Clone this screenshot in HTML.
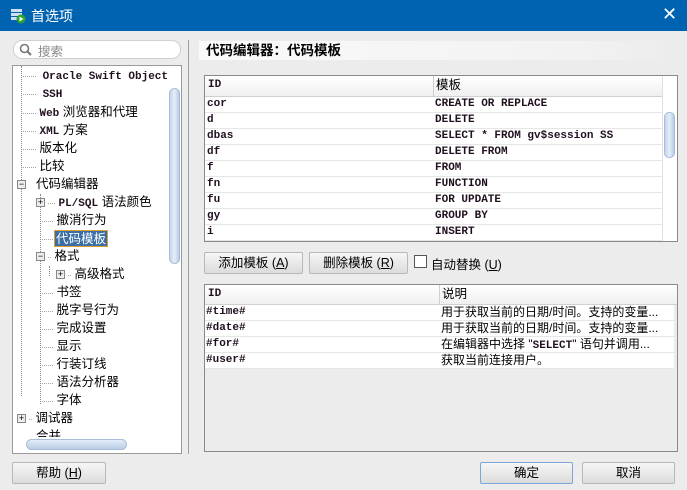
<!DOCTYPE html>
<html><head><meta charset="utf-8"><style>
*{box-sizing:border-box;margin:0;padding:0}
body{width:687px;height:490px;overflow:hidden;background:#ececec;font-family:"Liberation Sans","Noto Sans CJK SC",sans-serif;font-size:12px;color:#000;position:relative}
.abs{position:absolute}
.title{left:0;top:0;width:687px;height:31px;background:#0063b1;color:#fff;font-size:14px}
.mono{font-family:"Liberation Mono","Noto Sans CJK SC",monospace;font-weight:bold;font-size:11px;color:#201020}
.tree div.r{position:absolute;height:18px;line-height:18px;font-size:12.5px;white-space:nowrap}
.tree div.r.mono{font-size:11px}
.btn{position:absolute;height:22px;border:1px solid #b8b8b8;border-radius:2px;background:linear-gradient(#f6f6f6,#dcdcdc);text-align:center;line-height:20px;font-size:12.5px}
.tbl{position:absolute;border:1px solid #8a8a8a;background:#ececec;overflow:hidden}
.row{position:absolute;left:0;height:16px;line-height:15px;background:#fff;border-bottom:1px solid #e6e6e6;white-space:nowrap}
.hdr{position:absolute;left:0;top:0;background:linear-gradient(#fff,#f0f0f0);border-bottom:1px solid #d0d0d0;font-size:12.5px;line-height:19px}
.dot{position:absolute;border-left:1px dotted #888}
.pm{position:absolute;width:9px;height:9px;border:1px solid #888;background:#eee;font-size:9px;line-height:7px;text-align:center}
.g{color:#999;font-weight:normal;font-family:"Liberation Sans",sans-serif;font-size:9px;letter-spacing:-1px}
</style></head><body>
<div class="abs title">
 <svg class="abs" style="left:10px;top:8px" width="16" height="16"><rect x="1" y="1" width="11" height="3" fill="#cfe0f4"/><rect x="1" y="5" width="11" height="3" fill="#cfe0f4"/><rect x="1" y="9" width="6" height="3" fill="#cfe0f4"/><circle cx="11" cy="11" r="4.5" fill="#2aa52a"/><path d="M9.5 8.5 L13.5 11 L9.5 13.5Z" fill="#fff"/></svg>
 <span class="abs" style="left:31px;top:6px">首选项</span>
 <span class="abs" style="left:662px;top:4px;font-size:18px">✕</span>
</div>
<div class="abs" style="left:13px;top:40px;width:168px;height:19px;border:1px solid #d0d0d0;border-radius:9px;background:#fff"></div>
<svg class="abs" style="left:19px;top:43px" width="14" height="14"><circle cx="5.5" cy="5.5" r="4" fill="none" stroke="#777" stroke-width="1.6"/><path d="M8.5 8.5L12 12" stroke="#777" stroke-width="2"/></svg>
<span class="abs" style="left:38px;top:41px;color:#888;font-size:12.5px">搜索</span>
<div class="abs tree" style="left:12px;top:65px;width:170px;height:389px;border:1px solid #9a9a9a;background:#fff;overflow:hidden">
 <div class="dot" style="left:8px;top:0;height:330px"></div>
 <div class="dot" style="left:27px;top:128px;height:210px"></div>
 <div class="dot" style="left:36px;top:200px;height:10px"></div>
 <div class="r mono" style="left:9px;top:1px"><span class="g">·······</span> Oracle Swift Object St</div>
 <div class="r mono" style="left:9px;top:19px"><span class="g">·······</span> SSH</div>
 <div class="r" style="left:9px;top:37px"><span class="g">·······</span> <span class="mono">Web</span> 浏览器和代理</div>
 <div class="r" style="left:9px;top:55px"><span class="g">·······</span> <span class="mono">XML</span> 方案</div>
 <div class="r" style="left:9px;top:73px"><span class="g">·······</span> 版本化</div>
 <div class="r" style="left:9px;top:91px"><span class="g">·······</span> 比较</div>
 <div class="pm" style="left:4px;top:114px">−</div><div class="r" style="left:23px;top:109px">代码编辑器</div>
 <div class="pm" style="left:23px;top:132px">+</div><div class="r" style="left:34px;top:127px"><span class="g">····</span> <span class="mono">PL/SQL</span> 语法颜色</div>
 <div class="r" style="left:28px;top:145px"><span class="g">······</span> 撤消行为</div>
 <div class="r" style="left:28px;top:163px"><span class="g">······</span></div>
 <div class="r" style="left:41px;top:164px;height:17px;line-height:16px;background:#3a6ea5;color:#fff;border:1px solid #e0a030;padding:0 1px">代码模板</div>
 <div class="pm" style="left:23px;top:186px">−</div><div class="r" style="left:34px;top:181px"><span class="g">··</span> 格式</div>
 <div class="pm" style="left:43px;top:204px">+</div><div class="r" style="left:54px;top:199px"><span class="g">··</span> 高级格式</div>
 <div class="r" style="left:28px;top:217px"><span class="g">······</span> 书签</div>
 <div class="r" style="left:28px;top:235px"><span class="g">······</span> 脱字号行为</div>
 <div class="r" style="left:28px;top:253px"><span class="g">······</span> 完成设置</div>
 <div class="r" style="left:28px;top:271px"><span class="g">······</span> 显示</div>
 <div class="r" style="left:28px;top:289px"><span class="g">······</span> 行装订线</div>
 <div class="r" style="left:28px;top:307px"><span class="g">······</span> 语法分析器</div>
 <div class="r" style="left:28px;top:325px"><span class="g">······</span> 字体</div>
 <div class="pm" style="left:4px;top:348px">+</div><div class="r" style="left:15px;top:343px"><span class="g">··</span> 调试器</div>
 <div class="r" style="left:23px;top:361px">合并</div>
 <div class="abs" style="left:154px;top:0;width:15px;height:371px;background:#fff"></div>
 <div class="abs" style="left:156px;top:22px;width:11px;height:176px;border-radius:6px;background:linear-gradient(90deg,#c4d6ec,#e4eef9,#b8cce4);border:1px solid #a8bcd8"></div>
 <div class="abs" style="left:0;top:371px;width:168px;height:16px;background:#fff"></div>
 <div class="abs" style="left:13px;top:373px;width:101px;height:11px;border-radius:6px;background:linear-gradient(#e4eef9,#b8cce4);border:1px solid #a8bcd8"></div>
</div>
<div class="abs" style="left:188px;top:40px;width:1px;height:414px;background:#a0a0a0"></div>
<div class="abs" style="left:199px;top:41px;width:474px;height:19px;background:linear-gradient(90deg,#fafafa,#f2f2f2 80%,#ececec);font-size:13.5px;line-height:19px;padding-left:7px;font-weight:bold">代码编辑器：代码模板</div>
<div class="tbl" style="left:204px;top:75px;width:474px;height:167px">
 <div class="hdr" style="width:457px;height:21px"><span class="abs mono" style="left:3px">ID</span><span class="abs" style="left:228px;border-left:1px solid #d0d0d0;padding-left:2px;height:20px">模板</span></div>
 <div class="abs" style="left:457px;top:0;width:15px;height:165px;background:#fff;border-left:1px solid #e0e0e0"></div>
 <div class="abs" style="left:459px;top:36px;width:11px;height:46px;border-radius:5px;background:linear-gradient(90deg,#c4d6ec,#e4eef9,#b8cce4);border:1px solid #a8bcd8"></div>
 <div class="mono">
 <div class="row" style="top:21px;width:457px"><span class="abs" style="left:2px">cor</span><span class="abs" style="left:230px">CREATE OR REPLACE</span></div>
 <div class="row" style="top:37px;width:457px"><span class="abs" style="left:2px">d</span><span class="abs" style="left:230px">DELETE</span></div>
 <div class="row" style="top:53px;width:457px"><span class="abs" style="left:2px">dbas</span><span class="abs" style="left:230px">SELECT * FROM gv$session SS</span></div>
 <div class="row" style="top:69px;width:457px"><span class="abs" style="left:2px">df</span><span class="abs" style="left:230px">DELETE FROM</span></div>
 <div class="row" style="top:85px;width:457px"><span class="abs" style="left:2px">f</span><span class="abs" style="left:230px">FROM</span></div>
 <div class="row" style="top:101px;width:457px"><span class="abs" style="left:2px">fn</span><span class="abs" style="left:230px">FUNCTION</span></div>
 <div class="row" style="top:117px;width:457px"><span class="abs" style="left:2px">fu</span><span class="abs" style="left:230px">FOR UPDATE</span></div>
 <div class="row" style="top:133px;width:457px"><span class="abs" style="left:2px">gy</span><span class="abs" style="left:230px">GROUP BY</span></div>
 <div class="row" style="top:149px;width:457px"><span class="abs" style="left:2px">i</span><span class="abs" style="left:230px">INSERT</span></div>
 </div>
</div>
<div class="btn" style="left:204px;top:252px;width:99px">添加模板 (<u>A</u>)</div>
<div class="btn" style="left:309px;top:252px;width:99px">删除模板 (<u>R</u>)</div>
<div class="abs" style="left:414px;top:255px;width:13px;height:13px;border:1px solid #555;background:#fff"></div>
<span class="abs" style="left:431px;top:254px;font-size:12.5px">自动替换 (<u>U</u>)</span>
<div class="tbl" style="left:204px;top:284px;width:474px;height:168px">
 <div class="hdr" style="width:472px;height:20px"><span class="abs mono" style="left:3px">ID</span><span class="abs" style="left:234px;border-left:1px solid #d0d0d0;padding-left:2px;height:19px">说明</span></div>
 <div class="row" style="top:20px;width:469px"><span class="abs mono" style="left:1px">#time#</span><span class="abs" style="left:236px">用于获取当前的日期/时间。支持的变量...</span></div>
 <div class="row" style="top:36px;width:469px"><span class="abs mono" style="left:1px">#date#</span><span class="abs" style="left:236px">用于获取当前的日期/时间。支持的变量...</span></div>
 <div class="row" style="top:52px;width:469px"><span class="abs mono" style="left:1px">#for#</span><span class="abs" style="left:236px">在编辑器中选择 "<span class="mono">SELECT</span>" 语句并调用...</span></div>
 <div class="row" style="top:68px;width:469px"><span class="abs mono" style="left:1px">#user#</span><span class="abs" style="left:236px">获取当前连接用户。</span></div>
</div>
<div class="btn" style="left:12px;top:462px;width:94px">帮助 (<u>H</u>)</div>
<div class="btn" style="left:480px;top:462px;width:93px;border-color:#7aa7d8">确定</div>
<div class="btn" style="left:582px;top:462px;width:93px">取消</div>
</body></html>
